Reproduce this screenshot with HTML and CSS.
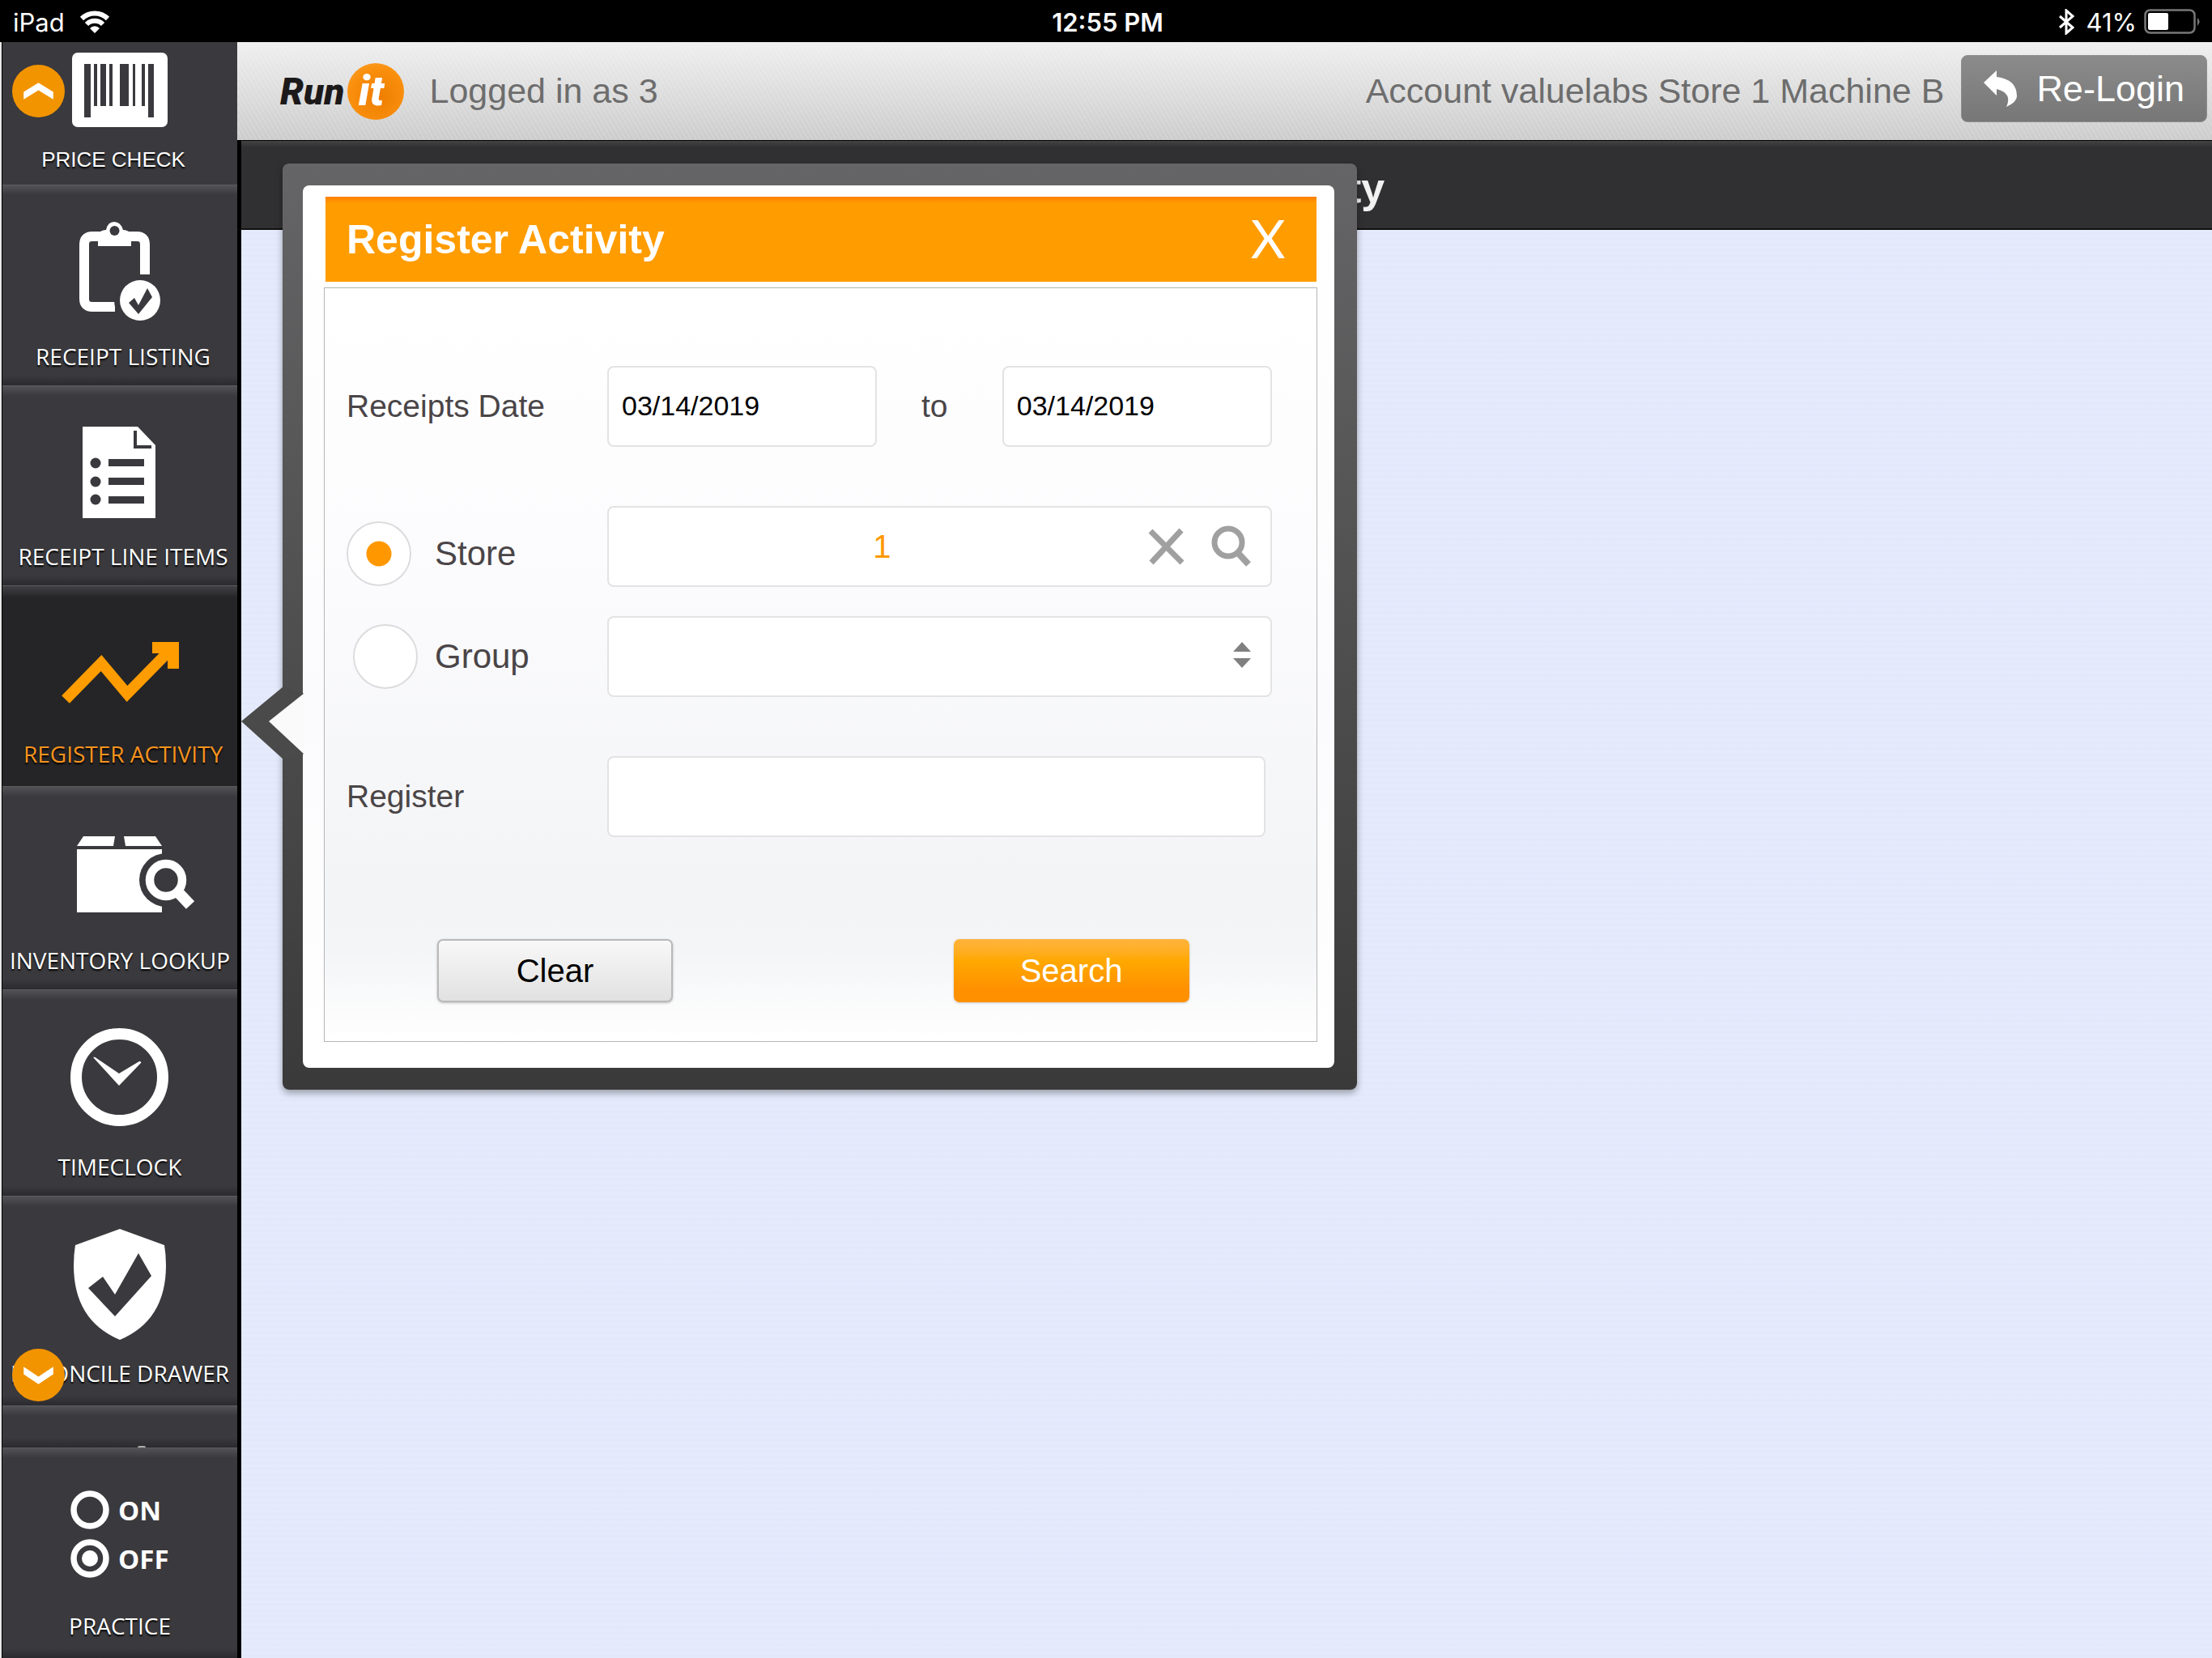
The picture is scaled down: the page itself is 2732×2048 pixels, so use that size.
FILE: index.html
```html
<!DOCTYPE html>
<html lang="en">
<head>
  <meta charset="UTF-8">
  <meta name="viewport" content="width=device-width,initial-scale=1">
  <title>Register Activity</title>
  <link rel="stylesheet" href="styles.css">
</head>
<body>

  <div class="status-bar">
    <div class="status-left">
      <span>iPad</span>
      <svg class="wifi" viewBox="0 0 38 28" aria-hidden="true">
        <path d="M3 10a23 23 0 0 1 32 0" fill="none" stroke="#fff" stroke-width="6"/>
        <path d="M9 17a14 14 0 0 1 20 0" fill="none" stroke="#fff" stroke-width="6"/>
        <path d="M13 22a8 8 0 0 1 12 0l-6 6z" fill="#fff"/>
      </svg>
    </div>
    <div class="status-time">12:55 PM</div>
    <div class="status-right">
      <svg class="bluetooth" viewBox="0 0 20 32" aria-hidden="true">
        <path d="M2 9l16 14-8 7V2l8 7L2 23" fill="none" stroke="#fff" stroke-width="3"/>
      </svg>
      <span>41%</span>
      <svg class="battery" viewBox="0 0 72 32" aria-hidden="true">
        <rect x="1.5" y="1.5" width="61" height="28" rx="6" fill="none" stroke="#777" stroke-width="2.5"/>
        <rect x="5" y="5" width="25" height="21" rx="2" fill="#fff"/>
        <path d="M66 11q5 4 0 10z" fill="#777"/>
      </svg>
    </div>
  </div>

  <div class="app">
    <nav class="sidebar">
      <a href="#" class="nav-item price-check">
        <svg class="barcode" viewBox="0 0 118 92" aria-hidden="true">
          <rect width="118" height="92" rx="7" fill="#fff"/>
          <path fill="#3a393d" d="M15 14h8v66h-8zM27 14h4v52h-4zM35 14h7v52h-7zM46 14h4v52h-4zM59 14h11v52H59zM75 14h3v52h-3zM86 14h4v52h-4zM94 14h7v66h-7z"/>
        </svg>
        <span class="nav-label">PRICE CHECK</span>
      </a>

      <a href="#" class="nav-item">
        <svg class="nav-icon" viewBox="0 0 200 140" aria-hidden="true">
          <path d="M131 77V40q0-10-10-10H66q-10 0-10 10v67q0 10 10 10h28" fill="none" stroke="#fff" stroke-width="12"/>
          <path d="M73 42V26q5-4 10-4 2-10 10-10t11 10q5 0 10 4v16z" fill="#fff"/>
          <circle cx="93.5" cy="23" r="6" fill="#3a393d"/>
          <circle cx="125" cy="109" r="32" fill="#3a393d"/>
          <circle cx="125" cy="109" r="25" fill="#fff"/>
          <path d="M111 112l7-6 5 9 11-21 6 11-17 21z" fill="#3a393d"/>
        </svg>
        <span class="nav-label">RECEIPT LISTING</span>
      </a>

      <a href="#" class="nav-item">
        <svg class="nav-icon" viewBox="0 0 200 140" aria-hidden="true">
          <path d="M54 18h68l22 23v90H54z" fill="#fff"/>
          <path d="M119 23v20h20" fill="none" stroke="#3a393d" stroke-width="4"/>
          <g fill="#3a393d">
            <circle cx="70" cy="63" r="6.5"/><circle cx="70" cy="86" r="6.5"/><circle cx="70" cy="108" r="6.5"/>
            <path d="M86 58h44v9H86zM86 81h44v9H86zM86 104h44v9H86z"/>
          </g>
        </svg>
        <span class="nav-label">RECEIPT LINE ITEMS</span>
      </a>

      <a href="#" class="nav-item raised active">
        <svg class="nav-icon" viewBox="0 0 200 140" aria-hidden="true">
          <path d="M33 111l44-45 32 38 54-55" fill="none" stroke="#ff9c00" stroke-width="13.5"/>
          <path d="M140 40h33v33h-14V63L149 54h-9z" fill="#ff9c00"/>
        </svg>
        <span class="nav-label">REGISTER ACTIVITY</span>
      </a>

      <a href="#" class="nav-item">
        <svg class="nav-icon" viewBox="0 0 200 140" aria-hidden="true">
          <path d="M47 37l8-12h39l-2 12zM105 25h39l8 12h-45zM47 41h105v78H47z" fill="#fff"/>
          <circle cx="157" cy="79" r="33" fill="#3a393d"/>
          <circle cx="157" cy="79" r="20" fill="none" stroke="#fff" stroke-width="10.5"/>
          <path d="M171 93l16 17" stroke="#fff" stroke-width="14"/>
        </svg>
        <span class="nav-label">INVENTORY LOOKUP</span>
      </a>

      <a href="#" class="nav-item">
        <svg class="nav-icon" viewBox="0 0 200 140" aria-hidden="true">
          <circle cx="99.5" cy="67.5" r="53.5" fill="none" stroke="#fff" stroke-width="14"/>
          <path d="M67 43q2-1 4 1l28 19 25-15q3 0 2 2L99 78z" fill="#fff"/>
        </svg>
        <span class="nav-label">TIMECLOCK</span>
      </a>

      <a href="#" class="nav-item raised">
        <svg class="nav-icon" viewBox="0 0 200 140" aria-hidden="true">
          <path d="M100 0l55 20q2 12 2 25 0 68-57 92-57-24-57-92 0-13 2-25z" fill="#fff"/>
          <path d="M61 73l18-14 15 22 29-51 16 28-45 50z" fill="#3a393d"/>
        </svg>
        <span class="nav-label">RECONCILE DRAWER</span>
      </a>

      <a href="#" class="nav-item peek" aria-label="More"><span class="peek-icon"></span></a>

      <a href="#" class="nav-item raised">
        <svg class="nav-icon" viewBox="0 0 200 140" aria-hidden="true">
          <circle cx="63" cy="35" r="20" fill="none" stroke="#fff" stroke-width="7.5"/>
          <circle cx="63" cy="95" r="20" fill="none" stroke="#fff" stroke-width="7.5"/>
          <circle cx="63" cy="95" r="10" fill="#fff"/>
          <text x="98" y="48" class="switch-text">ON</text>
          <text x="98" y="108" class="switch-text">OFF</text>
        </svg>
        <span class="nav-label">PRACTICE</span>
      </a>

      <button class="scroll-btn scroll-up" type="button" aria-label="Scroll up">
        <svg viewBox="0 0 64 64"><path d="M14 42V33L32 22l18 11v9L32 31z" fill="#fff"/></svg>
      </button>
      <button class="scroll-btn scroll-down" type="button" aria-label="Scroll down">
        <svg viewBox="0 0 64 64"><path d="M14 22v9l18 12 18-12v-9L32 34z" fill="#fff"/></svg>
      </button>
    </nav>

    <main class="main">
      <header class="top-bar">
        <div class="logo"><span class="logo-run">Run</span><span class="logo-it">it</span></div>
        <span class="logged-in">Logged in as 3</span>
        <span class="account">Account valuelabs Store 1 Machine B</span>
        <button class="relogin" type="button">
          <svg viewBox="0 0 42 46" aria-hidden="true">
            <path d="M0 15L16 0v8q25 3 25 24 0 7-13 13 8-17-12-22v8z" fill="#fff"/>
          </svg>
          Re-Login
        </button>
      </header>
      <h1 class="page-title">Register Activity</h1>

      <section class="popover">
        <svg class="popover-arrow" viewBox="0 0 78 90" aria-hidden="true">
          <path d="M0 43L52 0v90z" fill="#4a4a4a"/>
          <path d="M52 0l26 9v74l-26 7z" fill="#4a4a4a"/>
          <path d="M34 43L78 8v76z" fill="#fafafb"/>
        </svg>
        <div class="popover-body">
          <div class="popover-header">
            <h2>Register Activity</h2>
            <button class="close" type="button" aria-label="Close">X</button>
          </div>

          <form class="filter-form">
            <div class="form-row">
              <label class="form-label" for="dateFrom">Receipts Date</label>
              <div class="date-range">
                <input class="field date" id="dateFrom" type="text" value="03/14/2019">
                <label class="form-label" for="dateTo">to</label>
                <input class="field date" id="dateTo" type="text" value="03/14/2019">
              </div>
            </div>

            <div class="form-row store-row">
              <label class="radio-label"><input type="radio" name="scope" checked><span>Store</span></label>
              <div class="field lookup">
                <input type="text" value="1" aria-label="Store">
                <button type="button" aria-label="Clear store">
                  <svg class="icon-x" viewBox="0 0 45 46"><path d="M3 4l39 39M41 3L4 43" stroke="#a0a0a0" stroke-width="7"/></svg>
                </button>
                <button type="button" aria-label="Find store">
                  <svg class="icon-search" viewBox="0 0 50 52"><circle cx="21" cy="21" r="17" fill="none" stroke="#a0a0a0" stroke-width="7"/><path d="M32 33l14 15" stroke="#a0a0a0" stroke-width="8"/></svg>
                </button>
              </div>
            </div>

            <div class="form-row group-row">
              <label class="radio-label"><input type="radio" name="scope"><span>Group</span></label>
              <div class="select-wrap">
                <select class="field" aria-label="Group"><option></option></select>
                <svg viewBox="0 0 22 32" aria-hidden="true"><path d="M0 12L11 0l11 12zM0 20h22L11 32z" fill="#808080"/></svg>
              </div>
            </div>

            <div class="form-row register-row">
              <label class="form-label" for="register">Register</label>
              <input class="field" id="register" type="text">
            </div>

            <div class="form-actions">
              <button class="btn btn-clear" type="reset">Clear</button>
              <button class="btn btn-search" type="button">Search</button>
            </div>
          </form>
        </div>
      </section>
    </main>
  </div>

</body>
</html>
```
FILE: styles.css
```css
* {
  box-sizing: border-box;
}

body {
  margin: 0;
  height: 100vh;
  display: flex;
  flex-direction: column;
  overflow: hidden;
  background: #000;
  font-family: "Liberation Sans", Arial, sans-serif;
}

button, input, select {
  font-family: inherit;
  margin: 0;
}

svg {
  display: block;
}

/* status bar */

.status-bar {
  flex: none;
  display: grid;
  grid-template-columns: 1fr auto 1fr;
  align-items: center;
  height: 52px;
  padding: 2px 12px 0 16px;
  color: #fff;
  font-family: Inter, sans-serif;
  font-size: 31px;
}

.status-left, .status-right {
  display: flex;
  align-items: center;
  gap: 18px;
}

.status-right {
  justify-content: flex-end;
  gap: 9px;
}

.status-time {
  font-weight: 600;
}

.wifi {
  width: 38px;
  height: 28px;
}

.bluetooth {
  width: 20px;
  height: 32px;
  margin-right: 6px;
}

.battery {
  width: 72px;
  height: 32px;
}

/* layout */

.app {
  flex: 1;
  display: flex;
  min-height: 0;
}

.sidebar {
  position: relative;
  flex: none;
  width: 293px;
  display: grid;
  grid-template-rows: 176fr 248fr 247fr 248fr 251fr 255fr 259fr 52fr 260fr;
  border-left: 2px solid #e8e8e8;
  background: #000;
}

.nav-item {
  display: flex;
  flex-direction: column;
  align-items: center;
  justify-content: flex-end;
  min-height: 0;
  margin-left: 1px;
  padding-bottom: 18px;
  overflow: hidden;
  border-top: 1px solid #5c5b60;
  background: linear-gradient(#525156, #3a393d 12px, #3a393d calc(100% - 12px), #2b2a2e);
  color: #fff;
  text-decoration: none;
}

.raised {
  padding-bottom: 22px;
}

.active {
  background: linear-gradient(#414042, #252527 14px);
  color: #f7931e;
}

.nav-icon {
  flex: none;
  width: 200px;
  height: 140px;
  margin-bottom: 20px;
}

.nav-label {
  font-family: "Open Sans", sans-serif;
  font-size: 28px;
  line-height: 36px;
  white-space: nowrap;
  text-shadow: 0 2px 2px #000;
}

.nav-item:nth-child(-n+4) .nav-label {
  padding-left: 8px;
}

.price-check {
  padding-bottom: 13px;
  border-top: 0;
  background: #3a393d;
}

.sidebar .price-check .nav-label {
  padding: 0 16px 0 0;
  font-family: "Liberation Sans", Arial, sans-serif;
  font-size: 26px;
}

.barcode {
  width: 118px;
  height: 92px;
  margin-bottom: 22px;
}

.peek {
  padding: 0;
}

.peek-icon {
  width: 10px;
  height: 2px;
  margin-left: 54px;
  border-radius: 5px 5px 0 0;
  background: #aaa;
}

.switch-text {
  font-family: "Open Sans", sans-serif;
  font-size: 33px;
  font-weight: bold;
  fill: #fff;
}

.scroll-btn {
  position: absolute;
  left: 13px;
  width: 65px;
  height: 65px;
  padding: 0;
  border: 0;
  border-radius: 50%;
  background: #f29400;
}

.scroll-up {
  top: 28px;
}

.scroll-down {
  bottom: 317px;
}

.main {
  position: relative;
  flex: 1;
  min-width: 0;
  background: repeating-linear-gradient(rgba(255,255,255,0.06) 0 3px, rgba(200,210,235,0.04) 3px 7px), #e4eafc;
  border-left: 5px solid #000;
}

/* header */

.top-bar {
  display: flex;
  align-items: center;
  height: 122px;
  margin-left: -5px;
  padding: 0 6px 0 53px;
  border-bottom: 1px solid #000;
  background: repeating-linear-gradient(60deg, rgba(255,255,255,0.12) 0 2px, transparent 2px 5px), linear-gradient(#efefef, #cccccc);
  color: #6d6d6d;
  font-size: 43px;
}

.logo {
  display: flex;
  align-items: center;
  gap: 4px;
  margin-right: 31px;
  font-family: Roboto, sans-serif;
  font-style: italic;
  font-weight: 900;
  line-height: 70px;
}

.logo-run {
  color: #1c191a;
  font-size: 46px;
}

.logo-it {
  width: 70px;
  height: 70px;
  border-radius: 50%;
  background: radial-gradient(circle at 55% 60%, #ee7d00, #f98f0c 60%, #ffa533);
  color: #fff;
  font-size: 52px;
  padding-right: 12px;
  text-align: center;
}

.account {
  margin-left: auto;
  margin-right: 21px;
}

.relogin {
  display: flex;
  align-items: center;
  gap: 23px;
  height: 83px;
  margin-bottom: 6px;
  padding: 0 27px;
  border: 1px solid #8e8e8e;
  border-radius: 8px;
  background: linear-gradient(#8b8b8b, #777);
  color: #fff;
  font-size: 45px;
}

.relogin svg {
  width: 42px;
  height: 46px;
}

.page-title {
  margin: 0 0 0 -5px;
  height: 110px;
  padding-right: 18px;
  border-bottom: 2px solid #111;
  border-left: 5px solid #000;
  background: linear-gradient(#434444, #302f32 8px);
  color: #f1f1f1;
  font-size: 52px;
  line-height: 116px;
  text-align: center;
}

/* popover */

.popover {
  position: absolute;
  top: 150px;
  left: 51px;
  width: 54.5%;
  padding: 27px 28px 27px 25px;
  border-radius: 8px;
  background: linear-gradient(#656567, #4b4b4b 60%, #3a3a3a);
  box-shadow: 0 4px 8px rgba(0,0,0,0.35);
}

.popover-arrow {
  position: absolute;
  left: -51px;
  top: 646px;
  width: 78px;
  height: 90px;
}

.popover-body {
  padding: 14px 21px 32px 26px;
  border-radius: 8px;
  background: linear-gradient(#fff, #fbfbfd 60%, #fff);
}

.popover-header {
  display: flex;
  align-items: center;
  justify-content: space-between;
  height: 105px;
  margin: 0 1px 7px 2px;
  padding: 0 38px 0 26px;
  background: linear-gradient(#ff7e00, #ff9c00 8px);
  color: #fff;
}

.popover-header h2 {
  margin: 0;
  font-size: 50px;
}

.close {
  padding: 0 0 4px;
  border: 0;
  background: none;
  color: #fff;
  font-family: Lato, sans-serif;
  font-size: 66px;
  font-weight: 400;
  line-height: 80px;
}

.filter-form {
  padding: 96px 55px 48px 27px;
  border: 1px solid #b5b5b5;
  background: linear-gradient(#fff, #fbfbfd 40%, #f3f4f6 80%, #f4f5f7 88%, #fff);
}

.form-row {
  display: grid;
  grid-template-columns: 322px 1fr;
  align-items: center;
}

.form-label {
  color: #4a4547;
  font-size: 39px;
}

.field {
  width: 100%;
  height: 100px;
  border: 2px solid #e3e3e5;
  border-radius: 8px;
  background: #fff;
}

.date-range {
  display: grid;
  grid-template-columns: 1fr 155px 1fr;
  align-items: center;
  text-align: center;
}

.date-range .form-label {
  padding-right: 12px;
}

.date {
  padding: 0 16px 2px;
  color: #000;
  font-size: 34px;
}

.store-row {
  margin-top: 73px;
}

.group-row {
  margin-top: 36px;
}

.register-row {
  margin-top: 73px;
}

.register-row .field {
  width: calc(100% - 8px);
}

.radio-label {
  display: grid;
  grid-template-columns: 109px 1fr;
  align-items: center;
  color: #4a4547;
  font-size: 42px;
}

.store-row .radio-label {
  padding-top: 18px;
}

.radio-label input {
  appearance: none;
  width: 80px;
  height: 80px;
  border: 2px solid #dcdcde;
  border-radius: 50%;
  background: #fff;
}

.radio-label input:checked {
  background: radial-gradient(circle, #ff9800 15px, #fff 16px);
}

.group-row .radio-label input {
  margin-left: 8px;
}

.lookup {
  display: flex;
  align-items: center;
  gap: 33px;
  padding-right: 23px;
}

.lookup input {
  flex: 1;
  min-width: 0;
  height: 100%;
  padding: 0 0 0 42px;
  border: 0;
  background: none;
  color: #ff9800;
  font-size: 40px;
  text-align: center;
}

.lookup button {
  padding: 0;
  border: 0;
  background: none;
}

.icon-x {
  width: 45px;
  height: 46px;
}

.icon-search {
  width: 50px;
  height: 52px;
}

.select-wrap {
  position: relative;
}

.select-wrap select {
  display: block;
  appearance: none;
  padding: 0 60px 0 16px;
  font-size: 40px;
}

.select-wrap svg {
  position: absolute;
  top: 32px;
  right: 26px;
  width: 22px;
  height: 32px;
  pointer-events: none;
}

.form-actions {
  display: flex;
  justify-content: space-between;
  margin-top: 126px;
  padding: 0 102px 0 112px;
}

.btn {
  width: 291px;
  height: 78px;
  border-radius: 7px;
  font-size: 40px;
}

.btn-clear {
  border: 2px solid #b9b9b9;
  background: linear-gradient(#f8f8f8, #e1e1e1);
  box-shadow: 0 1px 3px rgba(0,0,0,0.25);
  color: #000;
}

.btn-search {
  border: 0;
  background: linear-gradient(#ffb33c, #ffae22 20%, #ffa800 35%, #ff9000 80%);
  box-shadow: 0 1px 3px rgba(0,0,0,0.2);
  color: #fff;
}
```
